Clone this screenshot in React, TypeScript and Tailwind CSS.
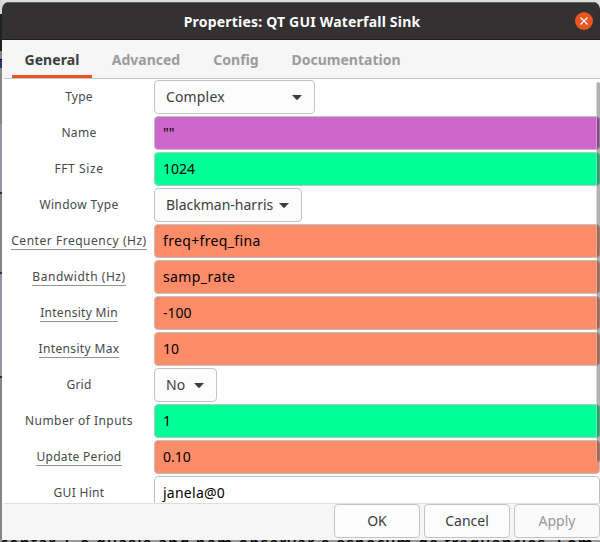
import React from "react";

type Row = {
  label: string;
  value: string;
  kind: "select" | "entry";
  style: string;
  labelStyle: string;
  valueStyle?: string;
  linked?: boolean;
};

const rows: Row[] = [
  { label: "Type", value: "Complex", kind: "select", style: "w-[161px]", labelStyle: "tracking-[0.25px]", valueStyle: "tracking-[0.15px]" },
  { label: "Name", value: '""', kind: "entry", style: "bg-[#cc66cc]", labelStyle: "tracking-[0.35px]" },
  { label: "FFT Size", value: "1024", kind: "entry", style: "bg-[#00ff99]", labelStyle: "tracking-[0.6px]" },
  { label: "Window Type", value: "Blackman-harris", kind: "select", style: "w-[148px]", labelStyle: "tracking-[0.35px]" },
  { label: "Center Frequency (Hz)", value: "freq+freq_fina", kind: "entry", style: "bg-[#ff8c69]", labelStyle: "tracking-[0.53px]", valueStyle: "tracking-[0.35px]", linked: true },
  { label: "Bandwidth (Hz)", value: "samp_rate", kind: "entry", style: "bg-[#ff8c69]", labelStyle: "tracking-[0.53px]", valueStyle: "tracking-[0.4px]", linked: true },
  { label: "Intensity Min", value: "-100", kind: "entry", style: "bg-[#ff8c69]", labelStyle: "tracking-[0.3px]", linked: true },
  { label: "Intensity Max", value: "10", kind: "entry", style: "bg-[#ff8c69]", labelStyle: "tracking-[0.34px]", linked: true },
  { label: "Grid", value: "No", kind: "select", style: "w-[63px]", labelStyle: "tracking-[0.25px]" },
  { label: "Number of Inputs", value: "1", kind: "entry", style: "bg-[#00ff99]", labelStyle: "tracking-[0.45px]" },
  { label: "Update Period", value: "0.10", kind: "entry", style: "bg-[#ff8c69]", labelStyle: "tracking-[0.3px]", linked: true },
  { label: "GUI Hint", value: "janela@0", kind: "entry", style: "bg-white", labelStyle: "tracking-[0.3px]", valueStyle: "tracking-[0.25px]" },
];

function Caret() {
  return (
    <svg width="10" height="5" viewBox="0 0 10 5" className="shrink-0">
      <path d="M0 0H10L5.8 4.6Q5 5.3 4.2 4.6Z" fill="#3d3d3d" />
    </svg>
  );
}

function PropertyRow({ row }: { row: Row }) {
  return (
    <div className="flex h-9 shrink-0">
      <div className="flex h-[34px] w-[150px] shrink-0 items-center justify-center pt-0.5 text-[12px] text-[#46494a]">
        <span className={`h-4 leading-[14px] whitespace-nowrap ${row.labelStyle} ${row.linked ? "border-b border-[#929595]" : ""}`}>
          {row.label}
        </span>
      </div>
      {row.kind === "select" ? (
        <div className={`flex h-[34px] items-center justify-between rounded-[4px] border border-[#c4c4c4] bg-[#fcfcfc] pr-3 pl-[11px] text-[14px] text-[#3d3d3d] ${row.style}`}>
          <span className={`-mt-0.5 whitespace-nowrap ${row.valueStyle ?? ""}`}>{row.value}</span>
          <Caret />
        </div>
      ) : (
        <div className={`flex h-[34px] flex-1 items-center rounded-[4px] border border-[#c0c0c0] pl-2 text-[14px] text-black ${row.style}`}>
          <span className={`-mt-0.5 ${row.valueStyle ?? ""}`}>{row.value}</span>
        </div>
      )}
    </div>
  );
}

export default function App() {
  return (
    <div className="relative h-[542px] w-[600px] overflow-hidden bg-[#dedede] font-['Noto_Sans','Open_Sans',sans-serif]">
      <div className="absolute inset-y-0 left-0 w-0.5 bg-[#858585]">
        <div className="h-[14px] bg-[#d5d5d5]" />
        <div className="h-[37px] bg-[#202020]" />
        <div className="h-2 bg-[#858585]" />
        <div className="h-px bg-black" />
        <div className="h-2 bg-[#263b72]" />
        <div className="mt-[56px] h-[70px] border-b-2 border-[#333] bg-[#9494a6]" />
        <div className="mt-[78px] h-[106px] border-y-2 border-[#333] bg-[#9494a6]" />
      </div>
      <div className="absolute bottom-0 left-0 h-[3px] w-full overflow-hidden bg-[#999] text-black">
        <p className="-mt-[6px] text-[16px] leading-5 font-medium tracking-[1.1px] whitespace-nowrap">contar. E o quasie and pam observar e especum de frequencies. Som</p>
      </div>
      <div className="absolute top-[2px] left-0.5 flex h-[538px] w-[598px] flex-col overflow-hidden rounded-t-[7px] bg-[#f6f6f6]">
        <header className="relative flex h-[38px] shrink-0 items-center justify-center border-t border-b border-t-[#656565] border-b-[#1d1d1d] bg-[#333132] pl-0.5 text-[14px] font-bold text-white">
          <h1 className="tracking-[0.2px]">Properties: QT GUI Waterfall Sink</h1>
          <button aria-label="Close" className="absolute top-[9px] right-[7px] flex size-[18px] items-center justify-center rounded-full bg-[#e95420]">
            <svg width="8" height="8" viewBox="0 0 8 8" stroke="white" strokeWidth="1.3"><path d="M.5 .5L7.5 7.5M7.5 .5L.5 7.5" /></svg>
          </button>
        </header>
        <nav className="ml-0.5 flex h-[39px] shrink-0 items-stretch border-b border-[#c4c4c4] pl-2 text-[14px] font-bold text-[#9b9b9b]">
          <div className="flex w-20 items-center justify-center border-b-[3px] border-[#e95420] pt-[3px] tracking-[0.1px] text-[#3d3d3d]">General</div>
          <div className="ml-2 flex w-[92px] items-center justify-center">Advanced</div>
          <div className="ml-2 flex w-[72px] items-center justify-center">Config</div>
          <div className="ml-2 flex w-[132px] items-center justify-center">Documentation</div>
        </nav>
        <main className="relative h-[424px] shrink-0 overflow-hidden bg-white pt-px pl-0.5">
          {rows.map((row) => <PropertyRow key={row.label} row={row} />)}
          <div className="absolute top-[3px] right-0 h-[380px] w-1 rounded-full border-l border-white/50 bg-black/30" />
        </main>
        <footer className="ml-0.5 flex flex-1 justify-end gap-1 border-t border-[#dedede] text-[14px] text-[#3d3d3d]">
          <button className="h-[34px] w-[86px] rounded-[4px] border border-[#c4c4c4] bg-[#fcfcfc] pb-0.5">OK</button>
          <button className="h-[34px] w-[86px] rounded-[4px] border border-[#c4c4c4] bg-[#fcfcfc] pb-0.5">Cancel</button>
          <button className="h-[34px] w-[86px] rounded-[4px] border border-[#c4c4c4] bg-[#fafafa] pb-0.5 text-[#999]">Apply</button>
        </footer>
      </div>
    </div>
  );
}
